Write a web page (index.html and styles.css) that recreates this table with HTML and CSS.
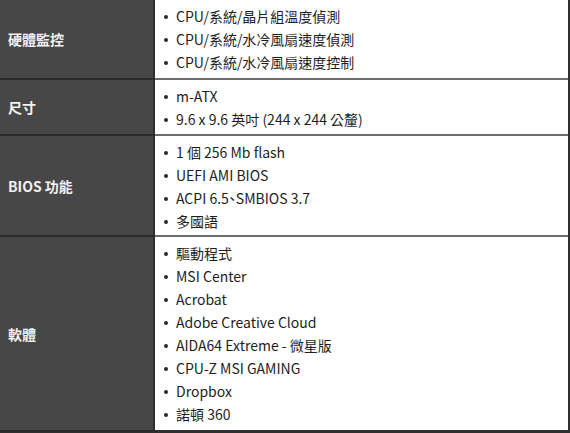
FILE: index.html
```html
<!DOCTYPE html>
<html lang="zh-Hant">
<head>
<meta charset="utf-8">
<link rel="stylesheet" href="styles.css">
</head>
<body>
<div class="spec">
  <div class="row r1">
    <div class="label">硬體監控</div>
    <ul class="vals">
      <li>CPU/系統/晶片組溫度偵測</li>
      <li>CPU/系統/水冷風扇速度偵測</li>
      <li>CPU/系統/水冷風扇速度控制</li>
    </ul>
  </div>
  <div class="row r2">
    <div class="label">尺寸</div>
    <ul class="vals">
      <li>m-ATX</li>
      <li>9.6 x 9.6 英吋 (244 x 244 公釐)</li>
    </ul>
  </div>
  <div class="row r3">
    <div class="label">BIOS 功能</div>
    <ul class="vals">
      <li>1 個 256 Mb flash</li>
      <li>UEFI AMI BIOS</li>
      <li class="halt">ACPI 6.5、SMBIOS 3.7</li>
      <li>多國語</li>
    </ul>
  </div>
  <div class="row last">
    <div class="label">軟體</div>
    <ul class="vals">
      <li>驅動程式</li>
      <li>MSI Center</li>
      <li>Acrobat</li>
      <li>Adobe Creative Cloud</li>
      <li>AIDA64 Extreme - 微星版</li>
      <li>CPU-Z MSI GAMING</li>
      <li>Dropbox</li>
      <li>諾頓 360</li>
    </ul>
  </div>
</div>
</body>
</html>
```

FILE: styles.css
```css
html, body {
  margin: 0;
  padding: 0;
  background: #ffffff;
}
body {
  font-family: "Noto Sans CJK TC", "Noto Sans", sans-serif;
  font-size: 14px;
  color: #1e1e1e;
}
.spec {
  width: 568px;
  border-right: 2px solid #2f2f2f;
  background: #2f2f2f;
  height: 433px;
  overflow: hidden;
}
.row {
  display: grid;
  grid-template-columns: 153px 1fr;
  column-gap: 2px;
  border-bottom: 2px solid #6e6e6e;
  position: relative;
}
.row.last {
  border-bottom: 2px solid #2f2f2f;
}
.label {
  background: #474747;
  color: #f2f2f2;
  font-weight: 700;
  display: flex;
  align-items: center;
  padding-left: 8px;
}
.row::after {
  content: "";
  position: absolute;
  left: 0;
  width: 155px;
  bottom: -2px;
  height: 2px;
  background: #2b2b2b;
}
.vals {
  background: #ffffff;
  margin: 0;
  list-style: none;
  padding: 5px 0 4px 21px;
}
.r2 .vals {
  padding: 5px 0 3px 21px;
}
.r3 .vals {
  padding: 5px 0 2px 21px;
}
.vals li {
  line-height: 23px;
  height: 23px;
  position: relative;
  white-space: nowrap;
}
.vals li::before {
  content: "";
  position: absolute;
  left: -12px;
  top: 10px;
  width: 4px;
  height: 4px;
  border-radius: 50%;
  background: #2a2a2a;
}
.halt {
  font-feature-settings: "halt";
}
```
